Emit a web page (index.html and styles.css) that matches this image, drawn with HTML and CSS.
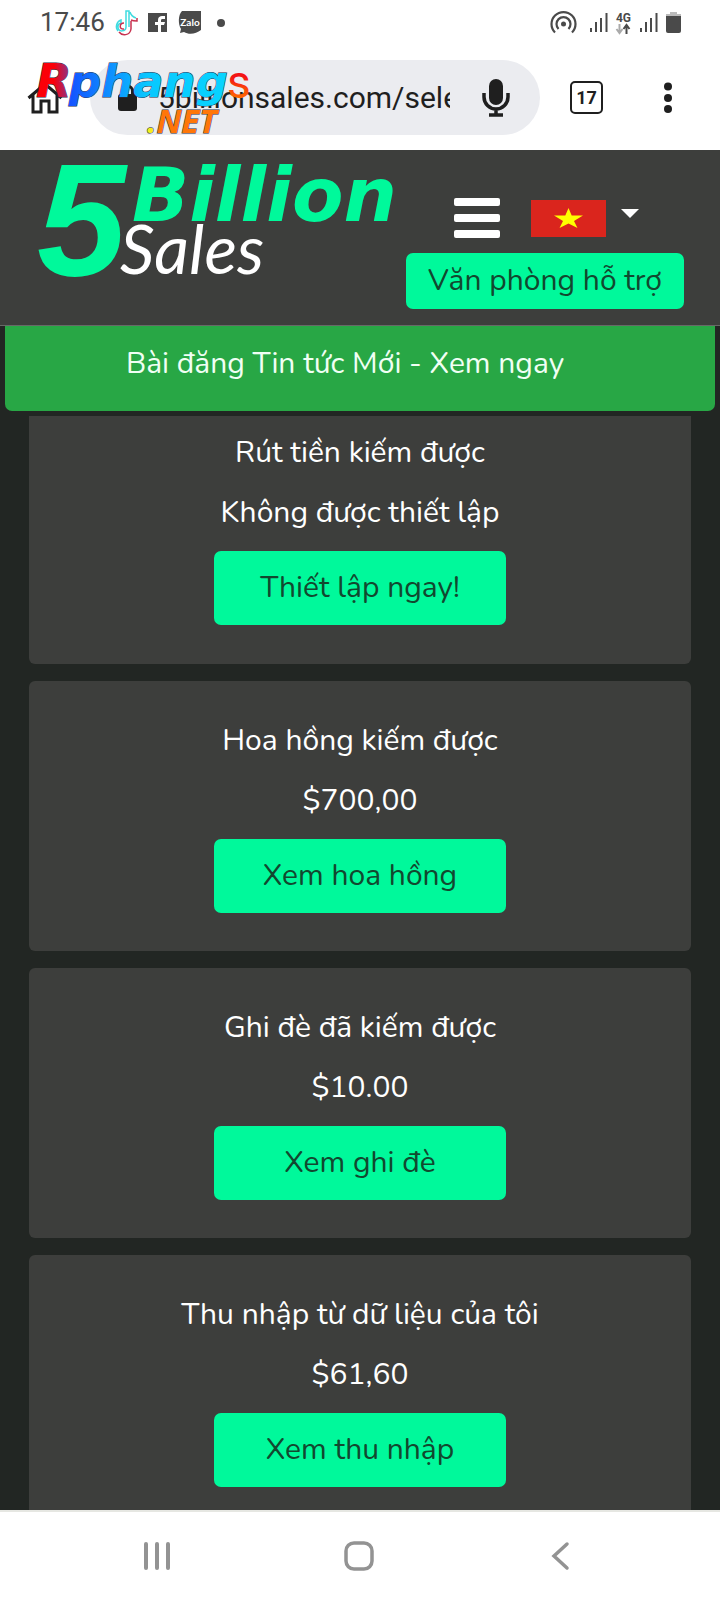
FILE: index.html
```html
<!DOCTYPE html>
<html lang="vi">
<head>
<meta charset="utf-8">
<meta name="viewport" content="width=device-width, initial-scale=1">
<title>5 Billion Sales</title>
<link rel="stylesheet" href="styles.css">
</head>
<body>
<div class="status">
  <time class="clock">17:46</time>
  <svg class="tiktok" width="22" height="26" viewBox="0 0 22 26" fill="none" stroke-width="1.5">
    <path stroke="#3fdbe0" d="M13 17V1h-3v16a4 4 0 1 1-5-4v-3a7 7 0 0 0-3 11M14 2c1 4 3 5 6 6"/>
    <path stroke="#c8324f" d="M15 10c2 1 4 1 6 1V8M15 11v8c-1 7-9 7-12 3M8 13c-5 0-5 7 0 6"/>
  </svg>
  <svg class="facebook" width="19" height="19" viewBox="0 0 19 19">
    <path fill="#4a4a4a" d="M0 0h19v19H0z"/>
    <path fill="#fff" d="M10 19v-7H7V9h3V7c0-3 2-4 4-4h3v3h-2c-1 0-2 0-2 1v2h4l-1 3h-3v7z"/>
  </svg>
  <svg class="zalo" width="23" height="23" viewBox="0 0 23 23">
    <path fill="#4a4a4a" d="M4 0h19v19c-5 4-12 5-17 2l-4 1 1-4C0 13 0 4 4 0z"/>
    <text x="12" y="15" text-anchor="middle" class="zalo-text">Zalo</text>
  </svg>
  <span class="dot"></span>
  <span class="grow"></span>
  <svg class="hotspot" width="27" height="23" viewBox="0 0 27 23" fill="none" stroke="#4a4a4a" stroke-width="2.2">
    <path d="M5 21.500a12 12 0 1 1 17 0M8.500 18a7 7 0 1 1 10 0"/><circle cx="13.500" cy="13" r="2.500" fill="#4a4a4a" stroke="none"/>
  </svg>
  <svg class="signal" width="19" height="20" viewBox="0 0 19 20" stroke="#4a4a4a" stroke-width="2"><path d="M2 15v4M7 9v10M12 5v14M17.500 0v19"/></svg>
  <span class="network">4G
    <svg width="14" height="10" viewBox="0 0 14 10" fill="none" stroke-width="2"><path stroke="#aaa" d="M3.500 0v8M.5 5l3 4 3-4"/><path stroke="#4a4a4a" d="M10.500 10V1.500M7.500 5l3-4 3 4"/></svg>
  </span>
  <svg class="signal signal-second" width="19" height="20" viewBox="0 0 19 20" stroke="#4a4a4a" stroke-width="2"><path d="M2 15v4M7 9v10M12 5v14M17.500 0v19"/></svg>
  <svg class="battery" width="15" height="21" viewBox="0 0 15 21"><path fill="#bbb" d="M4 0h7v3H4zM0 2h15v3H0z"/><path fill="#4a4a4a" d="M0 4h15v15q0 2-2 2H2q-2 0-2-2z"/></svg>
</div>

<div class="toolbar">
  <button class="icon home" aria-label="Home">
    <svg width="36" height="32" viewBox="0 0 36 32" fill="none" stroke="#1f1f1f" stroke-width="3"><path d="M1.500 16 18 2l16.500 14M6 13v17h8V19h8v11h8V13"/></svg>
  </button>
  <div class="omnibox">
    <svg width="20" height="27" viewBox="0 0 20 27"><rect y="10" width="19" height="17" rx="3" fill="#1f1f1f"/><path d="M4.500 11V7a5 5 0 0 1 10 0v4" fill="none" stroke="#1f1f1f" stroke-width="3"/></svg>
    <input class="url" type="text" aria-label="Address" value="5billionsales.com/sele">
    <button class="icon" aria-label="Voice search">
      <svg width="28" height="38" viewBox="0 0 28 38"><rect x="7" width="14" height="26" rx="7" fill="#1f1f1f"/><path d="M2 14v4a12 12 0 0 0 24 0v-4M14 30v6M7 36h14" fill="none" stroke="#1f1f1f" stroke-width="3.500"/></svg>
    </button>
  </div>
  <button class="tabs" aria-label="17 open tabs">17</button>
  <button class="icon more" aria-label="More">
    <svg width="8" height="32" viewBox="0 0 8 32" fill="#1f1f1f"><circle cx="4" cy="4.500" r="4"/><circle cx="4" cy="16" r="4"/><circle cx="4" cy="27" r="4"/></svg>
  </button>
  <svg class="watermark" width="224" height="84" viewBox="0 0 224 84" role="img" aria-label="Rphangs.NET">
    <defs>
      <linearGradient id="red" x1="0" x2="1"><stop offset=".5" stop-color="#fb0008"/><stop offset="1" stop-color="#7a3a9c"/></linearGradient>
      <linearGradient id="blue" x1="0" x2="1"><stop offset="0" stop-color="#1450ff"/><stop offset=".5" stop-color="#08c8ff"/><stop offset="1" stop-color="#08d4ff"/></linearGradient>
      <linearGradient id="fire" x1="0" y1="0" x2="0" y2="1"><stop offset=".4" stop-color="#f31414"/><stop offset=".8" stop-color="#ff6a00"/></linearGradient>
    </defs>
    <text class="wm-r" x="1" y="34" fill="url(#red)">R</text>
    <text class="wm-name" x="34" y="34" fill="url(#blue)">phang</text>
    <text class="wm-s" x="192" y="35" fill="url(#fire)">s</text>
    <text class="wm-net" x="112" y="70" fill="#ff7608"><tspan fill="#f5ee1c">.</tspan>NET</text>
  </svg>
</div>

<header class="header">
  <svg class="logo" width="366" height="118" viewBox="0 0 366 118" role="img" aria-label="5 Billion Sales">
    <text class="logo-five" x="-3" y="110">5</text>
    <text class="logo-billion" x="92" y="56">Billion</text>
    <text class="logo-sales" x="80" y="109">Sales</text>
  </svg>
  <div class="actions">
    <div class="menu">
      <button class="icon" aria-label="Menu">
        <svg width="46" height="40" viewBox="0 0 46 40" fill="#fff"><rect width="46" height="8" rx="2"/><rect y="16" width="46" height="8" rx="2"/><rect y="32" width="46" height="8" rx="2"/></svg>
      </button>
      <button class="icon language" aria-label="Tiếng Việt">
        <svg width="75" height="37" viewBox="0 0 75 37"><path fill="#da251d" d="M0 0h75v37H0z"/><path fill="#ff0" d="m37.500 8 3.200 7.500H52l-9 5.500 3.500 7-9-4.500-9 4.500 3.500-7-9-5.500h11.300z"/></svg>
        <svg class="caret" width="18" height="9" viewBox="0 0 18 9"><path fill="#fff" d="M0 0h18L9 9z"/></svg>
      </button>
    </div>
    <button class="btn support">Văn phòng hỗ trợ</button>
  </div>
</header>

<main class="content">
  <a class="news" href="#">Bài đăng Tin tức Mới - Xem ngay</a>
  <section class="card card-first">
    <p>Rút tiền kiếm được</p>
    <p>Không được thiết lập</p>
    <button class="btn">Thiết lập ngay!</button>
  </section>
  <section class="card">
    <p>Hoa hồng kiếm được</p>
    <p>$700,00</p>
    <button class="btn">Xem hoa hồng</button>
  </section>
  <section class="card">
    <p>Ghi đè đã kiếm được</p>
    <p>$10.00</p>
    <button class="btn">Xem ghi đè</button>
  </section>
  <section class="card">
    <p>Thu nhập từ dữ liệu của tôi</p>
    <p>$61,60</p>
    <button class="btn">Xem thu nhập</button>
  </section>
</main>

<nav class="system">
  <button class="icon" aria-label="Recent apps"><svg width="30" height="30" viewBox="0 0 30 30" stroke="#939393" stroke-width="4" stroke-linecap="round"><path d="M4 3v24M15 3v24M26 3v24"/></svg></button>
  <button class="icon" aria-label="Home screen"><svg width="30" height="30" viewBox="0 0 30 30" fill="none" stroke="#939393" stroke-width="3.500"><rect x="2" y="2" width="26" height="26" rx="8"/></svg></button>
  <button class="icon" aria-label="Back"><svg width="30" height="30" viewBox="0 0 30 30" fill="none" stroke="#939393" stroke-width="3.500" stroke-linecap="round"><path d="M21 3 8 15l13 12"/></svg></button>
</nav>
</body>
</html>
```
FILE: styles.css
```css
* { box-sizing: border-box; }

body {
  margin: 0;
  height: 100vh;
  display: flex;
  flex-direction: column;
  background: #fff;
  color: #fff;
  font: 30px/60px Nunito, "Noto Sans", sans-serif;
}

svg { display: block; flex: none; overflow: visible; }

button {
  border: 0;
  padding: 0;
  font: inherit;
  cursor: pointer;
}

.icon { background: none; display: flex; flex: none; }
.grow { flex: 1; }

.status {
  flex: none;
  height: 45px;
  display: flex;
  align-items: center;
  padding: 0 39px 0 40px;
  color: #4a4a4a;
}
.clock { font: 26px/45px Roboto, sans-serif; }
.tiktok { margin-left: 11px; }
.facebook { margin-left: 10px; }
.zalo { margin-left: 11px; }
.zalo-text { font: bold 10px Lato, sans-serif; fill: #fff; }
.dot { width: 8px; height: 8px; border-radius: 50%; background: #4a4a4a; margin-left: 16px; }
.signal { margin-left: 12px; }
.signal-second { margin-left: 8px; }
.network {
  margin-left: 8px;
  font: bold 12px/12px Roboto, sans-serif;
}
.battery { margin-left: 8px; }

.toolbar {
  flex: none;
  position: relative;
  height: 105px;
  display: flex;
  align-items: center;
  padding: 0 48px 0 27px;
}
.omnibox {
  flex: 1;
  min-width: 0;
  height: 75px;
  margin-left: 27px;
  padding: 0 30px 0 28px;
  display: flex;
  align-items: center;
  border-radius: 38px;
  background: #ebecf0;
}
.url {
  flex: 1;
  min-width: 0;
  margin: 0 32px 0 20px;
  padding: 0;
  border: 0;
  outline: 0;
  background: none;
  color: #1f1f1f;
  font: 30px/40px Roboto, sans-serif;
}
.tabs {
  width: 33px;
  height: 33px;
  margin: 0 61px 0 30px;
  border: 2px solid #1f1f1f;
  border-radius: 5px;
  background: none;
  color: #1f1f1f;
  font: bold 18px/29px Roboto, sans-serif;
}
.watermark { position: absolute; left: 35px; top: 18px; }
.watermark text { stroke: #29304a; stroke-width: 1px; paint-order: stroke; font-style: italic; }
.wm-r { font: bold 46px "DejaVu Sans", sans-serif; }
.wm-name { font: bold 45px "DejaVu Sans", sans-serif; }
.watermark .wm-s { font: 46px Roboto, sans-serif; stroke: none; }
.wm-net { font: bold 33px "Open Sans", sans-serif; }

.header {
  flex: none;
  display: flex;
  justify-content: space-between;
  padding: 15px 36px 16px 40px;
  background: #3d3e3c;
  border-bottom: 1px solid #676967;
}
.logo { margin-right: -36px; }
.logo text { fill: #00f99b; font-weight: bold; font-style: italic; }
.logo .logo-five { font-family: "Liberation Sans", sans-serif; font-size: 160px; }
.logo .logo-billion { font-family: Verdana, "DejaVu Sans", sans-serif; font-size: 75px; }
.logo .logo-sales { fill: #fff; font-family: "Brush Script MT", Lato, cursive; font-size: 68px; font-weight: normal; }
.actions { padding-top: 33px; }
.menu {
  display: flex;
  align-items: center;
  gap: 31px;
  padding-left: 48px;
  margin-bottom: 15px;
}
.language { gap: 15px; }
.caret { margin-top: 9px; }

.btn {
  width: 292px;
  height: 74px;
  border-radius: 7px;
  background: #00f99b;
  color: #12482f;
}
.support { display: block; width: 278px; height: 56px; line-height: 56px; }

.content {
  flex: 1;
  min-height: 0;
  overflow: hidden;
  background: #222623;
}
.news {
  display: block;
  height: 85px;
  margin: 0 5px 5px;
  padding: 8px 30px 0 0;
  border-radius: 0 0 7px 7px;
  background: #28a745;
  color: #f0fff4;
  text-align: center;
  text-decoration: none;
}
.card {
  margin: 0 29px 17px;
  padding: 30px 20px 38px;
  border-radius: 6px;
  background: #3d3e3c;
  text-align: center;
}
.card-first { padding-top: 7px; padding-bottom: 39px; border-radius: 0 0 6px 6px; }
.card p { margin: 0; }
.card .btn { display: block; margin: 8px auto 0; }

.system {
  flex: none;
  height: 90px;
  display: flex;
  align-items: center;
  justify-content: space-between;
  padding: 0 144px 0 142px;
  border-top: 2px solid #e6e7e2;
}
```
